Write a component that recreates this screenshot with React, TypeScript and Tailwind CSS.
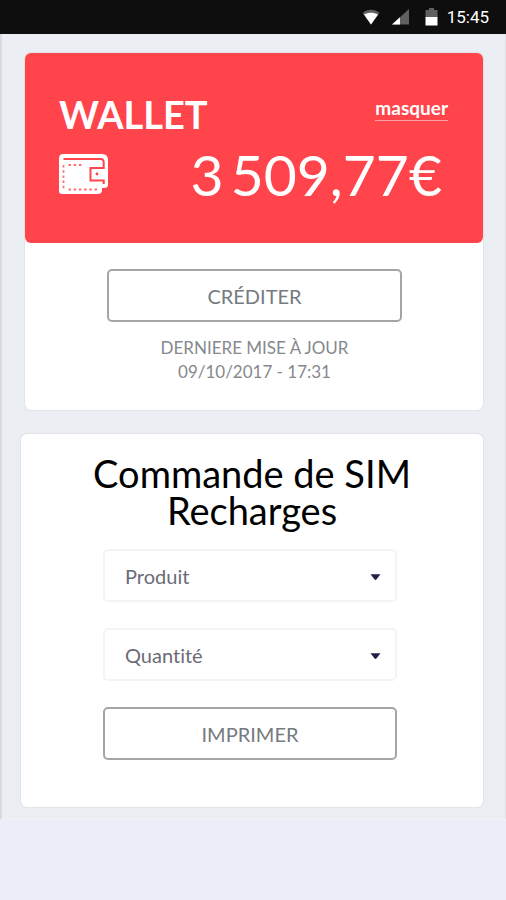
import React, { useState } from "react"

const outlineButton =
  "h-[53px] w-full cursor-pointer rounded-[5px] border-2 border-[#a2a6a9] bg-white text-[20px] leading-6 text-[#757b80]"

export default function App() {
  const [hidden, setHidden] = useState(false)

  return (
    <div className="min-h-screen bg-[#ebeef6] font-['Lato',sans-serif] [font-variant-ligatures:none]">
      <StatusBar />
      <main className="border-b-2 border-l-2 border-r border-b-[#eff1f4] border-l-[#d9dbe0] border-r-[#dfe2e6] bg-[#ebeef3] pt-[19px] pr-[22px] pb-[11px] pl-[19px]">
        <section className="ml-1 rounded-md bg-white pb-[26px] shadow-[0_0_2px_rgba(100,110,130,0.25)]">
          <div className="flex h-[190px] flex-col rounded-md bg-[#ff444c] pt-[37px] pr-[35px] pl-[34px] text-white">
            <div className="flex items-start justify-between">
              <h1 className="text-[38px] leading-[48px] font-bold">WALLET</h1>
              <button
                type="button"
                className="mt-[6px] cursor-pointer border-b border-[#ff9fa4] text-[19px] leading-6 font-bold"
                onClick={() => setHidden(!hidden)}
              >
                {hidden ? "afficher" : "masquer"}
              </button>
            </div>
            <div className="flex items-center justify-between pr-[6px]">
              <WalletIcon />
              <p className="text-[57px] leading-[72px]">
                {hidden ? "••••" : "3\u2009509,77€"}
              </p>
            </div>
          </div>
          <div className="flex flex-col pt-[26px] pr-[81px] pl-[82px] text-center">
            <button type="button" className={outlineButton}>
              CRÉDITER
            </button>
            <p className="pt-[14px] text-[17px] leading-6 text-[#85898d]">
              DERNIERE MISE À JOUR
              <br />
              09/10/2017 - 17:31
            </p>
          </div>
        </section>

        <section className="mt-6 rounded-md bg-white pt-[21px] pb-[47px] shadow-[0_0_2px_rgba(100,110,130,0.25)]">
          <h2 className="px-12 text-center text-[38px] leading-[37px] text-black">
            Commande de SIM Recharges
          </h2>
          <form
            className="flex flex-col gap-[26px] pt-5 pr-[86px] pl-[82px]"
            onSubmit={(e) => e.preventDefault()}
          >
            <SelectField name="Produit" />
            <SelectField name="Quantité" />
            <button type="submit" className={outlineButton}>
              IMPRIMER
            </button>
          </form>
        </section>
      </main>
    </div>
  )
}

function SelectField({ name }: { name: string }) {
  return (
    <div className="relative">
      <select
        aria-label={name}
        className="h-[53px] w-full appearance-none rounded-[5px] border-2 border-[#f4f4f6] bg-white px-5 text-[20px] leading-6 text-[#6b6b76]"
      >
        <option>{name}</option>
      </select>
      <svg
        className="pointer-events-none absolute top-[25px] right-4 h-[6px] w-[11px]"
        viewBox="0 0 11 6"
        fill="#24204a"
      >
        <path d="M0.5 0.3h10L6.6 5.2a1.4 1.4 0 0 1-2.2 0z" />
      </svg>
    </div>
  )
}

function StatusBar() {
  return (
    <header className="flex h-[34px] items-center justify-end bg-[#0e0e0e] pr-[17px] font-['Roboto',sans-serif] text-white">
      <svg className="h-4 w-[18px]" viewBox="0 0 18 16">
        <path d="M0.5 4C5.5 -0.2 12.5 -0.2 17.5 4L9 15.5z" fill="#606060" />
        <path d="M2 5.6C6.5 3.2 11.5 3.2 16 5.6L9 15.5z" fill="#fff" />
      </svg>
      <svg className="ml-3 h-4 w-[17px]" viewBox="0 0 17 16">
        <path d="M17 0v15.5H0z" fill="#606060" />
        <path d="M8 8.2v7.3H0z" fill="#fff" />
      </svg>
      <svg className="ml-4 h-[18px] w-[13px]" viewBox="0 0 13 18">
        <path d="M4 0h5v2h3.5v8H0.5V2H4z" fill="#606060" />
        <path d="M0.5 9h12v8.5H0.5z" fill="#fff" />
      </svg>
      <time className="ml-[9px] text-[17px] leading-5">15:45</time>
    </header>
  )
}

function WalletIcon() {
  return (
    <svg className="h-10 w-[49px]" viewBox="0 0 49 40" fill="none">
      <path
        d="M4 0H43Q49 0 49 6V31Q49 34 45 34H43V36Q43 40 39 40H3Q0 40 0 37V5Q0 0 4 0z"
        fill="#fff"
      />
      <path
        d="M4.5 4.9H42Q44.7 5 44.7 8.5V14H31.5V26.5H44.7V30"
        stroke="#ff444c"
        strokeWidth="2"
      />
      <path
        d="M9.5 11H25M4.5 11V36M9.5 35.5H38"
        stroke="#ff6d72"
        strokeWidth="1.8"
        strokeDasharray="2.5 2.7"
      />
      <circle cx="38" cy="20" r="1.4" fill="#ff444c" />
    </svg>
  )
}
